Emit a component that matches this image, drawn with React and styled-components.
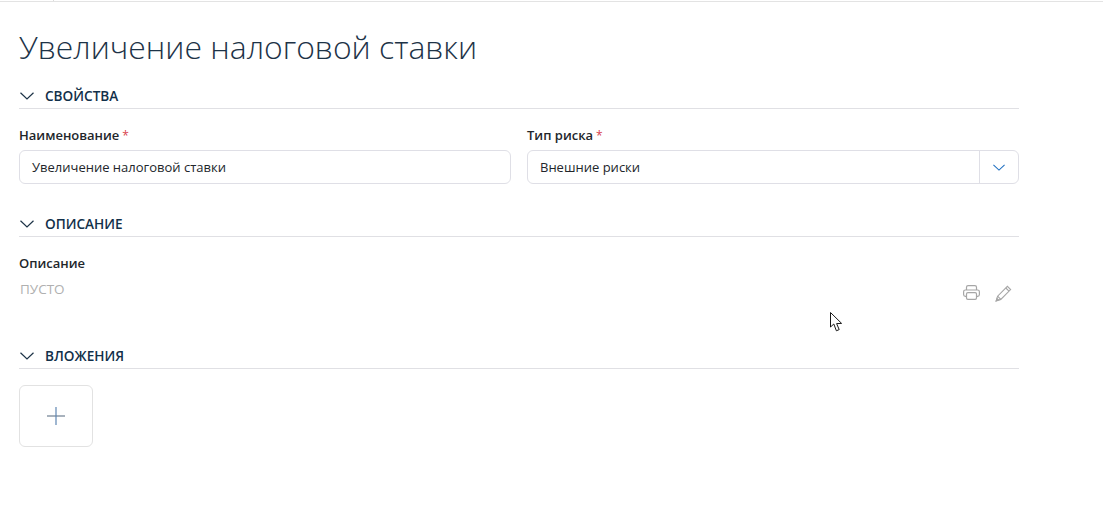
import React from "react"
import styled, { createGlobalStyle } from "styled-components"

const GlobalStyle = createGlobalStyle`
  html, body {
    margin: 0;
    padding: 0;
    background: #fff;
    font-family: "Open Sans", "Noto Sans", sans-serif;
    color: #1f2a36;
  }
`

const Chevron = ({ width = 14, color = "#1d3347" }) => (
  <svg width={width} height={width / 2 + 1} viewBox="0 0 14 8" fill="none">
    <path d="M0.5 0.8 L7 7 L13.5 0.8" stroke={color} strokeWidth="1.2" />
  </svg>
)

const PrinterIcon = () => (
  <svg width="17" height="15" viewBox="0 0 17 15" fill="none" stroke="#a6a6a6" strokeWidth="1.2">
    <path d="M3.5 5 V2.2 Q3.5 0.6 5.1 0.6 H11.9 Q13.5 0.6 13.5 2.2 V5" />
    <path d="M3.5 11.4 H2.4 Q0.6 11.4 0.6 9.6 V6.8 Q0.6 5 2.4 5 H14.6 Q16.4 5 16.4 6.8 V9.6 Q16.4 11.4 14.6 11.4 H13.5" />
    <rect x="3.5" y="7.6" width="10" height="6.8" rx="1.4" />
  </svg>
)

const PencilIcon = () => (
  <svg width="17" height="17" viewBox="0 0 17 17" fill="none" stroke="#a6a6a6" strokeWidth="1.1">
    <path d="M1.2 15.8 L2.6 11.2 L12.4 1.4 L15.6 4.6 L5.8 14.4 Z" />
    <path d="M2.6 11.2 L5.8 14.4 M10.8 3 L14 6.2" />
    <path d="M1.2 15.8 L2 13.4 L3.6 15 Z" fill="#a6a6a6" />
  </svg>
)

const PlusIcon = () => (
  <svg width="18" height="18" viewBox="0 0 18 18">
    <path d="M0 9 H18" stroke="#6f7f92" strokeWidth="1.2" />
    <path d="M9 0 V18" stroke="#5f86b3" strokeWidth="1.2" />
  </svg>
)

const App = () => {
  return (
    <Page>
      <GlobalStyle />
      <TopBar>
        <TopTick />
      </TopBar>
      <Content>
        <Title>Увеличение налоговой ставки</Title>

        <Section $gap={19}>
          <SectionHead>
            <Chevron />
            <SectionTitle>Свойства</SectionTitle>
          </SectionHead>
          <FieldGrid>
            <Field>
              <Label>
                Наименование<Required>*</Required>
              </Label>
              <Input>Увеличение налоговой ставки</Input>
            </Field>
            <Field>
              <Label>
                Тип риска<Required>*</Required>
              </Label>
              <Input>
                <SelectText>Внешние риски</SelectText>
                <SelectButton>
                  <Chevron width={12} color="#1f6fc0" />
                </SelectButton>
              </Input>
            </Field>
          </FieldGrid>
        </Section>

        <Section $gap={31}>
          <SectionHead>
            <Chevron />
            <SectionTitle>Описание</SectionTitle>
          </SectionHead>
          <DescriptionRow>
            <div>
              <Label>Описание</Label>
              <Empty>Пусто</Empty>
            </div>
            <Tools>
              <PrinterIcon />
              <PencilIcon />
            </Tools>
          </DescriptionRow>
        </Section>

        <Section $gap={35}>
          <SectionHead>
            <Chevron />
            <SectionTitle>Вложения</SectionTitle>
          </SectionHead>
          <AddButton>
            <PlusIcon />
          </AddButton>
        </Section>
      </Content>
      <Cursor width="14" height="21" viewBox="0 0 14 21">
        <path
          d="M0.5 0.5 L0.5 15 L3.8 12 L6.4 18.8 L9.2 17.6 L6.6 11.6 L11.6 11.4 Z"
          fill="#fff"
          stroke="#1a1a1a"
          strokeWidth="1"
        />
      </Cursor>
    </Page>
  )
}

export default App

const Page = styled.div`
  position: relative;
  width: 1103px;
  height: 510px;
  overflow: hidden;
  background: #fff;
`
const TopBar = styled.div`
  height: 1px;
  border-bottom: 1px solid #e3e3e3;
  padding-left: 53px;
`
const TopTick = styled.div`
  width: 1px;
  height: 1px;
  background: #dcdcdc;
`
const Content = styled.div`
  width: 1000px;
  padding: 24px 0 0 19px;
`
const Title = styled.h1`
  margin: 0;
  height: 42px;
  font-size: 31.9px;
  line-height: 42px;
  font-weight: 300;
  color: #1d3347;
`
const Section = styled.section`
  margin-top: ${(p) => p.$gap}px;
`
const SectionHead = styled.div`
  display: flex;
  align-items: center;
  gap: 11px;
  padding: 0 0 3px 1px;
  border-bottom: 1px solid #e0e0e4;
`
const SectionTitle = styled.h2`
  margin: 0;
  font-size: 13.6px;
  line-height: 18px;
  font-weight: 600;
  text-transform: uppercase;
  color: #12304a;
`
const FieldGrid = styled.div`
  display: grid;
  grid-template-columns: 1fr 1fr;
  column-gap: 16px;
  padding-top: 17px;
`
const Field = styled.div`
  display: flex;
  flex-direction: column;
  gap: 6px;
`
const Label = styled.div`
  height: 18px;
  font-size: 13px;
  line-height: 18px;
  font-weight: 600;
  color: #22262b;
`
const Required = styled.span`
  margin-left: 3px;
  font-size: 12px;
  line-height: 1;
  color: #d9434e;
  font-weight: 400;
`
const Input = styled.div`
  display: flex;
  align-items: center;
  height: 34px;
  box-sizing: border-box;
  padding-left: 12px;
  border: 1px solid #dfdfe6;
  border-radius: 6px;
  font-size: 13px;
  color: #22262b;
`
const SelectText = styled.span`
  flex: 1;
`
const SelectButton = styled.span`
  display: flex;
  align-items: center;
  justify-content: center;
  width: 38px;
  height: 100%;
  border-left: 1px solid #dfdfe6;
`
const DescriptionRow = styled.div`
  display: flex;
  justify-content: space-between;
  height: 75px;
  padding-top: 17px;
  box-sizing: border-box;
`
const Empty = styled.div`
  margin-top: 8px;
  padding-left: 1px;
  font-size: 13.5px;
  line-height: 18px;
  text-transform: uppercase;
  color: #b0b0b0;
`
const Tools = styled.div`
  display: flex;
  align-items: flex-start;
  gap: 15px;
  padding: 31px 7px 0 0;
`
const AddButton = styled.div`
  display: flex;
  align-items: center;
  justify-content: center;
  width: 74px;
  height: 62px;
  box-sizing: border-box;
  margin-top: 16px;
  border: 1px solid #e2e2e2;
  border-radius: 6px;
`
const Cursor = styled.svg`
  position: absolute;
  left: 830px;
  top: 312px;
`
